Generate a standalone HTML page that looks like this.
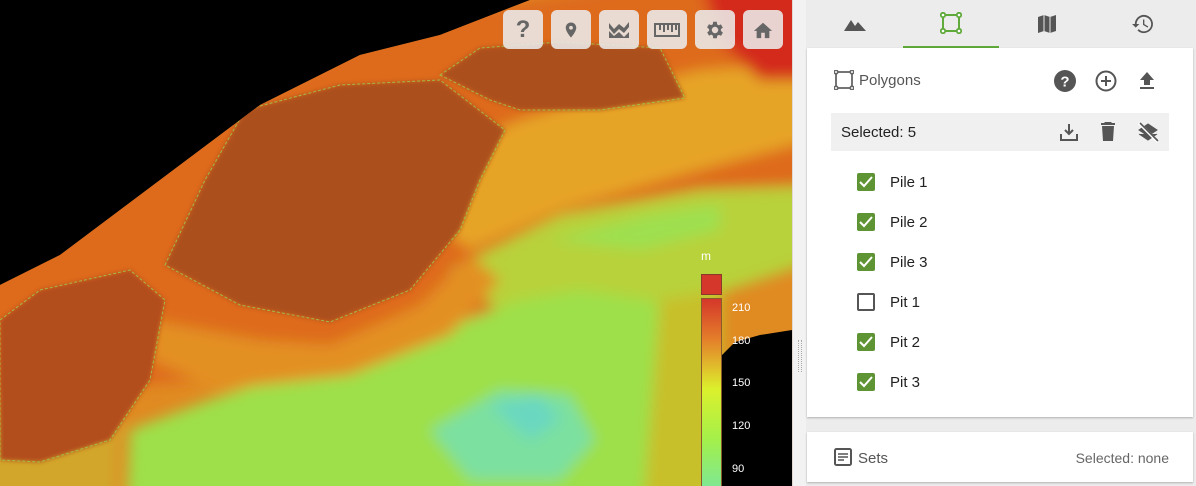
<!DOCTYPE html>
<html><head><style>
*{margin:0;padding:0;box-sizing:border-box}
html,body{width:1196px;height:486px;overflow:hidden}
body{position:relative;font-family:"Liberation Sans",sans-serif;background:#000}
.map{position:absolute;left:0;top:0;width:792px;height:486px;overflow:hidden}
.map>svg{display:block}
.tb{position:absolute;top:10px;width:40px;height:39px;border-radius:6px;background:rgba(235,235,235,.88);display:flex;align-items:center;justify-content:center}
.panel{position:absolute;left:792px;top:0;width:404px;height:486px;background:#ececec;overflow:hidden}
.tab{position:absolute;top:0;height:48px;width:96px;display:flex;align-items:center;justify-content:center}
.card{position:absolute;left:15px;width:386px;background:#fff;box-shadow:0 1px 2px rgba(0,0,0,.25)}
.row{position:absolute;left:65px;height:20px;display:flex;align-items:center;font-size:15px;color:#222}
.cb{width:18px;height:18px;border-radius:2px;background:#5f9435;margin-right:15px;display:flex;align-items:center;justify-content:center}
.cb.off{background:#fff;border:2px solid #555}
.lbl{position:absolute;left:732px;color:#fff;font-size:11px}
</style></head><body>
<div class="map">
<svg width="792" height="486" viewBox="0 0 792 486">
<defs>
<filter id="b" x="-20%" y="-20%" width="140%" height="140%"><feGaussianBlur stdDeviation="7"/></filter>
<filter id="b2"><feGaussianBlur stdDeviation="2"/></filter>
<clipPath id="c"><polygon points="-50,310 60,255 160,180 260,105 360,55 440,35 530,0 850,-50 850,320 792,330 760,335 735,342 722,355 722,550 -50,550"/></clipPath>
</defs>
<rect width="792" height="486" fill="#000"/>
<g clip-path="url(#c)">
<rect x="-50" y="-50" width="900" height="600" fill="#e08a22"/>
<g filter="url(#b)">
<polygon points="-50,250 200,130 400,20 850,-50 850,200 620,240 520,300 380,360 200,380 -50,400" fill="#de6a1e"/>
<polygon points="380,180 520,120 620,90 700,70 850,60 850,130 700,170 560,210 470,250" fill="#e6a426"/>
<polygon points="450,270 560,215 700,190 850,185 850,250 700,300 600,320 510,320" fill="#b8d23a"/>
<polygon points="550,240 650,215 720,205 720,230 640,250" fill="#9ee050"/>
<polygon points="210,400 330,360 440,330 520,300 580,290 650,300 700,330 700,550 125,550 130,430" fill="#9ee048"/>
<polygon points="150,320 260,340 330,345 420,305 470,255 500,280 450,335 350,375 220,390 150,360" fill="#e39024"/>
<polygon points="430,430 500,390 570,395 595,440 560,480 470,480" fill="#7be0a0"/>
<polygon points="490,405 540,395 560,420 530,440" fill="#6ad8c0"/>
<polygon points="-50,440 60,400 120,400 115,550 -50,550" fill="#d2a62a"/>
<polygon points="660,300 722,290 722,550 640,550" fill="#c8c02c"/>
<polygon points="690,-50 850,-50 850,80 760,80 720,40" fill="#d42a1a"/>
</g>
<g filter="url(#b2)">
<polygon points="0,320 40,290 130,270 165,300 150,380 110,440 40,462 0,460" fill="#b24d1c"/>
<polygon points="165,265 205,180 245,110 340,85 440,80 505,130 480,180 460,230 410,290 330,322 240,305" fill="#ab4f1e"/>
<polygon points="440,75 480,48 560,42 660,48 685,98 600,110 520,110 490,100" fill="#ab4f1e"/>
</g>
<g fill="none" stroke="#9cd050" stroke-width="1" stroke-dasharray="3 2" opacity=".8">
<polygon points="0,320 40,290 130,270 165,300 150,380 110,440 40,462 0,460"/>
<polygon points="165,265 205,180 245,110 340,85 440,80 505,130 480,180 460,230 410,290 330,322 240,305"/>
<polygon points="440,75 480,48 560,42 660,48 685,98 600,110 520,110 490,100"/>
</g>
</g>
</svg>
<div class="tb" style="left:503px"><span style="font-size:24px;font-weight:bold;color:#666">?</span></div>
<div class="tb" style="left:551px"><svg width="18" height="24" viewBox="0 0 24 24"><path d="M12 2C8.1 2 5 5.1 5 9c0 5.3 7 13 7 13s7-7.7 7-13c0-3.9-3.1-7-7-7zm0 9.5a2.5 2.5 0 110-5 2.5 2.5 0 010 5z" fill="#666"/></svg></div>
<div class="tb" style="left:599px"><svg width="24" height="22" viewBox="0 0 24 22"><path d="M2 4l5 6 5-5 5 4 5-6v5l-5 6-5-4-5 5-5-6z M2 12l5 5 5-4 5 5 5-5v6H2z" fill="#666"/></svg></div>
<div class="tb" style="left:647px"><svg width="26" height="14" viewBox="0 0 26 14"><rect x="1" y="1" width="24" height="12" fill="none" stroke="#666" stroke-width="2"/><path d="M6 2v5M10 2v7M14 2v5M18 2v7M22 2v5" stroke="#666" stroke-width="2"/></svg></div>
<div class="tb" style="left:695px"><svg width="22" height="22" viewBox="0 0 24 24"><path d="M19.4 13a7.5 7.5 0 000-2l2.1-1.6-2-3.5-2.5 1a7.3 7.3 0 00-1.7-1L15 3h-4l-.4 2.7a7.3 7.3 0 00-1.7 1l-2.5-1-2 3.5L6.6 11a7.5 7.5 0 000 2l-2.1 1.6 2 3.5 2.5-1c.5.4 1.1.7 1.700 1L11 21h4l.4-2.7c.6-.3 1.2-.6 1.7-1l2.5 1 2-3.5zM13 15.5a3.5 3.5 0 110-7 3.5 3.5 0 010 7z" fill="#666" transform="translate(-1 0)"/></svg></div>
<div class="tb" style="left:743px"><svg width="22" height="20" viewBox="0 0 24 22"><path d="M10 20v-6h4v6h5v-8h3L12 3 2 12h3v8z" fill="#666"/></svg></div>
<div style="position:absolute;left:701px;top:249px;color:#fff;font-size:12px">m</div>
<div style="position:absolute;left:701px;top:274px;width:21px;height:21px;background:#d5372a;border:1px solid #8a3a2a"></div>
<div style="position:absolute;left:701px;top:298px;width:21px;height:188px;border:1px solid #8a5a2a;border-bottom:none;background:linear-gradient(#d5372a,#e4802a 22%,#dcf02c 48%,#a4f04a 75%,#7fe890)"></div>
<div class="lbl" style="top:302px">210</div>
<div class="lbl" style="top:335px">180</div>
<div class="lbl" style="top:377px">150</div>
<div class="lbl" style="top:420px">120</div>
<div class="lbl" style="top:463px">90</div>
</div>
<div class="panel">
<div style="position:absolute;left:0;top:0;width:14px;height:486px;background:#f2f2f2;border-left:1px solid #e0d8d0"></div>
<div style="position:absolute;left:6px;top:340px;width:4px;height:32px;border-left:1px dotted #aaa;border-right:1px dotted #aaa"></div>
<div class="tab" style="left:15px"><svg width="22" height="14" viewBox="0 0 22 14"><path d="M0 14L7 3l4 6 3-4 8 9z" fill="#555"/></svg></div>
<div class="tab" style="left:111px;border-bottom:2px solid #5faa3a"><svg width="22" height="22" viewBox="0 0 22 22"><rect x="3" y="3" width="16" height="16" fill="none" stroke="#5faa3a" stroke-width="2"/><g fill="#fff" stroke="#5faa3a" stroke-width="1.8"><circle cx="3" cy="3" r="2.2"/><circle cx="19" cy="3" r="2.2"/><circle cx="3" cy="19" r="2.2"/><circle cx="19" cy="19" r="2.2"/></g></svg></div>
<div class="tab" style="left:207px"><svg width="20" height="20" viewBox="0 0 20 20"><path d="M1 3l6-2 6 2 6-2v16l-6 2-6-2-6 2z" fill="#555"/><path d="M7 1v16M13 3v16" stroke="#ececec" stroke-width="1"/></svg></div>
<div class="tab" style="left:303px"><svg width="22" height="20" viewBox="0 0 24 22"><path d="M13 1a10 10 0 00-10 10H0l4 4 4-4H5a8 8 0 112.3 5.7l-1.4 1.4A10 10 0 1013 1zm-1 5v6l5 3 .8-1.3-4.3-2.5V6z" fill="#555"/></svg></div>
<div class="card" style="top:48px;height:369px">
<svg style="position:absolute;left:27px;top:22px" width="20" height="20" viewBox="0 0 20 20"><rect x="2" y="2" width="16" height="16" fill="none" stroke="#666" stroke-width="1.8"/><g fill="#fff" stroke="#666" stroke-width="1.6"><circle cx="2" cy="2" r="1.8"/><circle cx="18" cy="2" r="1.8"/><circle cx="2" cy="18" r="1.8"/><circle cx="18" cy="18" r="1.8"/></g></svg>
<div style="position:absolute;left:52px;top:24px;font-size:15px;color:#555">Polygons</div>
<svg style="position:absolute;left:247px;top:22px" width="22" height="22" viewBox="0 0 22 22"><circle cx="11" cy="11" r="11" fill="#555"/><text x="11" y="16.5" text-anchor="middle" fill="#fff" font-size="15" font-weight="bold" font-family="Liberation Sans">?</text></svg>
<svg style="position:absolute;left:288px;top:22px" width="22" height="22" viewBox="0 0 22 22"><circle cx="11" cy="11" r="9.5" fill="none" stroke="#555" stroke-width="2"/><path d="M11 6v10M6 11h10" stroke="#555" stroke-width="2"/></svg>
<svg style="position:absolute;left:332px;top:24px" width="16" height="18" viewBox="0 0 16 18"><path d="M8 0L1 8h4v5h6V8h4zM1 15h14v2H1z" fill="#555"/></svg>
<div style="position:absolute;left:24px;top:65px;width:338px;height:38px;background:#f0f0f0"></div>
<div style="position:absolute;left:34px;top:76px;font-size:15px;color:#222">Selected: 5</div>
<svg style="position:absolute;left:252px;top:74px" width="20" height="20" viewBox="0 0 20 20"><path d="M10 2v10M6 8l4 4 4-4" stroke="#555" stroke-width="2" fill="none"/><path d="M2 12v6h16v-6" stroke="#555" stroke-width="2" fill="none"/></svg>
<svg style="position:absolute;left:294px;top:74px" width="14" height="19" viewBox="0 0 14 19"><path d="M4 0h6l1 1h3v2H0V1h3zM1 4h12l-1 15H2z" fill="#555"/></svg>
<svg style="position:absolute;left:330px;top:73px" width="22" height="22" viewBox="0 0 22 22"><path d="M11 3L2 9l9 6 9-6zM2 13l9 6 9-6" fill="#555" stroke="#555"/><path d="M2 2l19 19" stroke="#fff" stroke-width="3"/><path d="M3 2l18 18" stroke="#555" stroke-width="1.6"/></svg>
</div>
<div class="row" style="top:172px;left:65px"><div class="cb"><svg width="14" height="12" viewBox="0 0 14 12"><path d="M1 6l4 4 8-9" stroke="#fff" stroke-width="2" fill="none"/></svg></div>Pile 1</div>
<div class="row" style="top:212px"><div class="cb"><svg width="14" height="12" viewBox="0 0 14 12"><path d="M1 6l4 4 8-9" stroke="#fff" stroke-width="2" fill="none"/></svg></div>Pile 2</div>
<div class="row" style="top:252px"><div class="cb"><svg width="14" height="12" viewBox="0 0 14 12"><path d="M1 6l4 4 8-9" stroke="#fff" stroke-width="2" fill="none"/></svg></div>Pile 3</div>
<div class="row" style="top:292px"><div class="cb off"></div>Pit 1</div>
<div class="row" style="top:332px"><div class="cb"><svg width="14" height="12" viewBox="0 0 14 12"><path d="M1 6l4 4 8-9" stroke="#fff" stroke-width="2" fill="none"/></svg></div>Pit 2</div>
<div class="row" style="top:372px"><div class="cb"><svg width="14" height="12" viewBox="0 0 14 12"><path d="M1 6l4 4 8-9" stroke="#fff" stroke-width="2" fill="none"/></svg></div>Pit 3</div>
<div class="card" style="top:432px;height:50px">
<svg style="position:absolute;left:27px;top:16px" width="18" height="18" viewBox="0 0 18 18"><rect x="1" y="1" width="16" height="16" rx="1.5" fill="none" stroke="#555" stroke-width="2"/><path d="M4 6h10M4 9h10M4 12h6" stroke="#555" stroke-width="1.6"/></svg>
<div style="position:absolute;left:51px;top:18px;font-size:15px;color:#555">Sets</div>
<div style="position:absolute;right:24px;top:18px;font-size:14px;color:#666">Selected: none</div>
</div>
</div>
</body></html>
